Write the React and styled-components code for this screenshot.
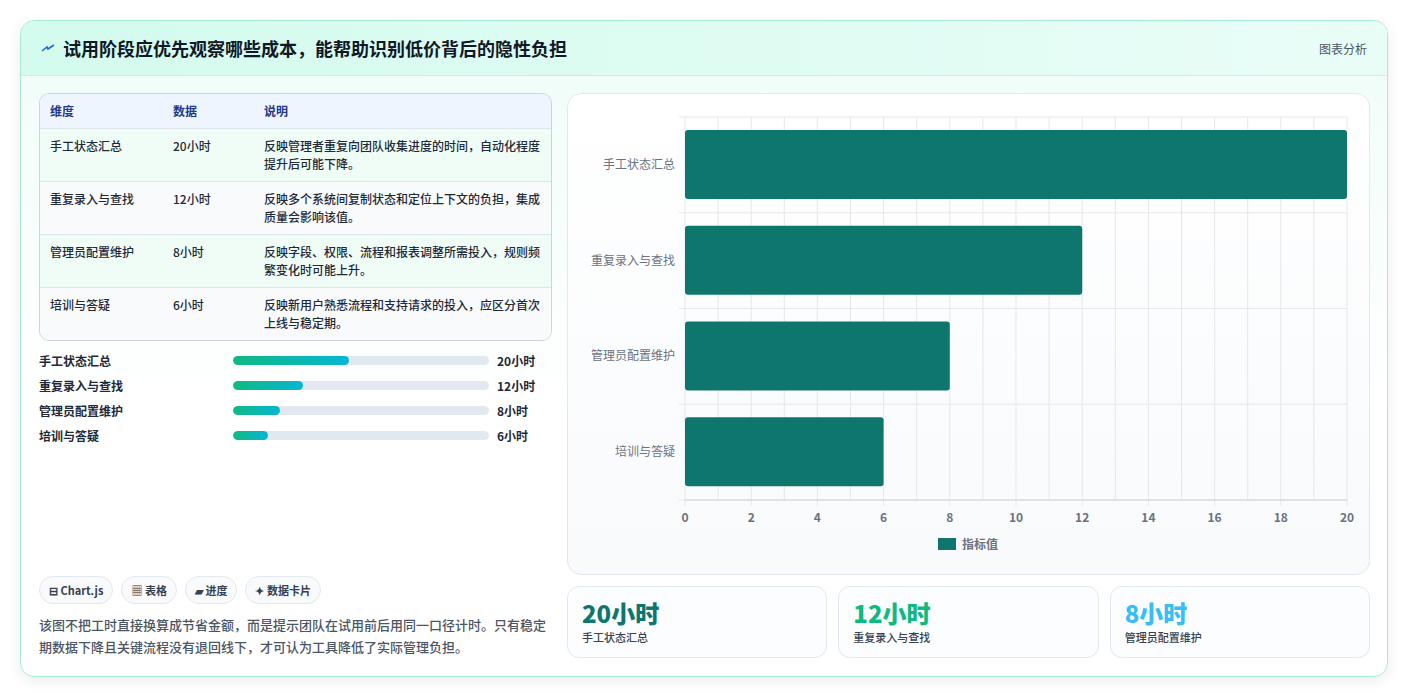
import React from "react";
import styled, { createGlobalStyle } from "styled-components";

const Global = createGlobalStyle`
  body { margin: 0; background: #f3f4f6; font-family: "Noto Sans CJK SC", "Noto Sans", sans-serif; }
`;

const Page = styled.div`
  padding: 20px 20px 22px 20px;
  background: #fff;
`;

const Card = styled.div`
  border: 1px solid #a7ecd9;
  border-radius: 14px;
  overflow: hidden;
  background: linear-gradient(180deg, #effdf8 0%, #ffffff 60%);
  box-shadow: 0 4px 14px rgba(0, 0, 0, 0.08);
`;

const Header = styled.div`
  height: 54px;
  display: flex;
  align-items: center;
  justify-content: space-between;
  padding: 0 20px;
  background: linear-gradient(90deg, #d3fbee, #e9fdf7);
  border-bottom: 1px solid #c9f0e3;
`;

const Title = styled.h1`
  margin: 0;
  font-size: 18px;
  font-weight: 700;
  color: #111827;
  display: flex;
  align-items: center;
  gap: 8px;
`;

const HeaderTag = styled.span`
  font-size: 12px;
  color: #4b5563;
`;

const Body = styled.div`
  display: grid;
  grid-template-columns: 513px 1fr;
  gap: 15px;
  padding: 17px 19px 18px 18px;
`;

const Left = styled.div`
  display: flex;
  flex-direction: column;
`;

const Table = styled.div`
  border: 1px solid #cbd5e1;
  border-radius: 10px;
  overflow: hidden;
  font-size: 12px;
`;

const Row = styled.div`
  display: grid;
  grid-template-columns: 123px 91px 1fr;
  padding: ${(p) => (p.$head ? "8px 10px" : "8px 10px 8px 10px")};
  min-height: ${(p) => (p.$head ? "16px" : "36px")};
  background: ${(p) => (p.$head ? "#eef5fe" : p.$alt ? "#f8fafc" : "#f0fdf7")};
  border-top: ${(p) => (p.$first ? "none" : "1px solid #dbe3ec")};
  color: ${(p) => (p.$head ? "#1e3a8a" : "#1f2937")};
  font-weight: ${(p) => (p.$head ? 700 : 500)};
  line-height: 18px;
`;

const Desc = styled.span`
  font-weight: 500;
`;

const Bars = styled.div`
  display: flex;
  flex-direction: column;
  gap: 7px;
  margin-top: 10px;
`;

const BarRow = styled.div`
  display: grid;
  grid-template-columns: 186px 256px 1fr;
  gap: 0 8px;
  align-items: center;
  font-size: 12px;
  font-weight: 600;
  color: #1f2937;
  height: 18px;
`;

const Track = styled.div`
  height: 9px;
  border-radius: 5px;
  background: #e2e8f0;
  overflow: hidden;
`;

const Fill = styled.div`
  height: 100%;
  border-radius: 5px;
  background: linear-gradient(90deg, #10b981, #06b6d4);
`;

const Chips = styled.div`
  display: flex;
  gap: 8px;
  margin-top: auto;
`;

const Chip = styled.span`
  font-size: 11px;
  font-weight: 600;
  color: #374151;
  padding: 5px 9px;
  border: 1px solid #e2e8f0;
  border-radius: 14px;
  background: #f8fafc;
`;

const Note = styled.p`
  margin: 10px 0 0;
  font-size: 13px;
  line-height: 22px;
  color: #4b5563;
  font-weight: 500;
`;

const Right = styled.div`
  display: flex;
  flex-direction: column;
  gap: 11px;
`;

const ChartCard = styled.div`
  height: 480px;
  border: 1px solid #e2e8f0;
  border-radius: 14px;
  background: linear-gradient(180deg, #ffffff, #f8fafc);
`;

const Kpis = styled.div`
  display: grid;
  grid-template-columns: repeat(3, 1fr);
  gap: 11px;
`;

const Kpi = styled.div`
  border: 1px solid #e2e8f0;
  border-radius: 12px;
  padding: 10px 14px 12px;
  background: #fbfdff;
`;

const KpiValue = styled.div`
  font-size: 24px;
  font-weight: 800;
  line-height: 32px;
  color: ${(p) => p.$c};
`;

const KpiLabel = styled.div`
  font-size: 11px;
  color: #374151;
  font-weight: 500;
`;

const data = [
  ["手工状态汇总", 20, "反映管理者重复向团队收集进度的时间，自动化程度提升后可能下降。"],
  ["重复录入与查找", 12, "反映多个系统间复制状态和定位上下文的负担，集成质量会影响该值。"],
  ["管理员配置维护", 8, "反映字段、权限、流程和报表调整所需投入，规则频繁变化时可能上升。"],
  ["培训与答疑", 6, "反映新用户熟悉流程和支持请求的投入，应区分首次上线与稳定期。"],
];

function Chart() {
  const x0 = 117, x1 = 779, y0 = 23, y1 = 406;
  const sx = (v) => x0 + ((x1 - x0) * v) / 20;
  const rowH = (y1 - y0) / 4;
  return (
    <svg width="801" height="480" viewBox="0 0 801 480" fontFamily="'Noto Sans CJK SC', sans-serif">
      {Array.from({ length: 21 }, (_, i) => (
        <line key={i} x1={sx(i)} x2={sx(i)} y1={y0} y2={y1 + (i % 2 === 0 ? 6 : 0)} stroke="#e5e7eb" />
      ))}
      {[0, 1, 2, 3, 4].map((i) => (
        <line key={i} x1={x0 - 6} x2={x1} y1={y0 + rowH * i} y2={y0 + rowH * i} stroke="#e5e7eb" />
      ))}
      <line x1={x0} x2={x1} y1={y1} y2={y1} stroke="#cbd5e1" />
      {data.map(([n, v], i) => (
        <g key={n}>
          <rect x={x0} y={y0 + rowH * i + 13} width={sx(v) - x0} height={69} rx="3" fill="#0f766e" />
          <text x={x0 - 10} y={y0 + rowH * i + rowH / 2 + 4} textAnchor="end" fontSize="12" fill="#6b7280">{n}</text>
        </g>
      ))}
      {[0, 2, 4, 6, 8, 10, 12, 14, 16, 18, 20].map((v) => (
        <text key={v} x={sx(v)} y={428} textAnchor="middle" fontSize="12" fontWeight="700" fill="#6b7280">{v}</text>
      ))}
      <rect x={370} y={444} width={18} height={12} fill="#0f766e" />
      <text x={394} y={455} fontSize="12" fontWeight="600" fill="#6b7280">指标值</text>
    </svg>
  );
}

export default function App() {
  return (
    <Page>
      <Global />
      <Card>
        <Header>
          <Title>
            <svg width="14" height="10" viewBox="0 0 14 10"><path d="M1 8 L6 4 L7 6 L13 2" stroke="#2563eb" strokeWidth="1.6" fill="none" /></svg>
            试用阶段应优先观察哪些成本，能帮助识别低价背后的隐性负担
          </Title>
          <HeaderTag>图表分析</HeaderTag>
        </Header>
        <Body>
          <Left>
            <Table>
              <Row $head $first><span>维度</span><span>数据</span><span>说明</span></Row>
              {data.map(([n, v, d], i) => (
                <Row key={n} $alt={i % 2 === 1}>
                  <span>{n}</span><span>{v}小时</span><Desc>{d}</Desc>
                </Row>
              ))}
            </Table>
            <Bars>
              {data.map(([n, v]) => (
                <BarRow key={n}>
                  <span>{n}</span>
                  <Track><Fill style={{ width: `${(v / 44) * 100}%` }} /></Track>
                  <span>{v}小时</span>
                </BarRow>
              ))}
            </Bars>
            <Chips>
              <Chip>⊟ Chart.js</Chip>
              <Chip>▦ 表格</Chip>
              <Chip>▰ 进度</Chip>
              <Chip>✦ 数据卡片</Chip>
            </Chips>
            <Note>该图不把工时直接换算成节省金额，而是提示团队在试用前后用同一口径计时。只有稳定期数据下降且关键流程没有退回线下，才可认为工具降低了实际管理负担。</Note>
          </Left>
          <Right>
            <ChartCard><Chart /></ChartCard>
            <Kpis>
              <Kpi><KpiValue $c="#0f766e">20小时</KpiValue><KpiLabel>手工状态汇总</KpiLabel></Kpi>
              <Kpi><KpiValue $c="#10b981">12小时</KpiValue><KpiLabel>重复录入与查找</KpiLabel></Kpi>
              <Kpi><KpiValue $c="#38bdf8">8小时</KpiValue><KpiLabel>管理员配置维护</KpiLabel></Kpi>
            </Kpis>
          </Right>
        </Body>
      </Card>
    </Page>
  );
}
